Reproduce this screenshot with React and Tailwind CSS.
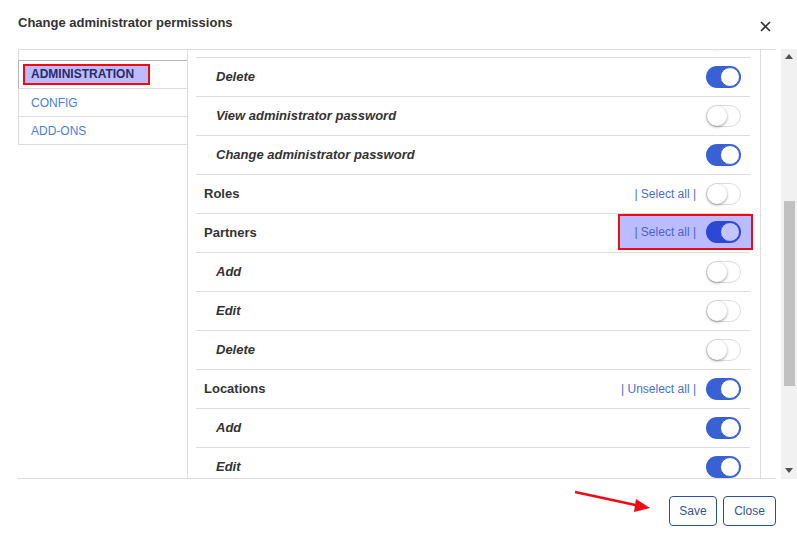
import { memo } from "react"

const rows = [
  { label: "", sub: true, on: false },
  { label: "Delete", sub: true, on: true },
  { label: "View administrator password", sub: true, on: false },
  { label: "Change administrator password", sub: true, on: true },
  { label: "Roles", link: "| Select all |", on: false },
  { label: "Partners", link: "| Select all |", on: true, marked: true },
  { label: "Add", sub: true, on: false },
  { label: "Edit", sub: true, on: false },
  { label: "Delete", sub: true, on: false },
  { label: "Locations", link: "| Unselect all |", on: true },
  { label: "Add", sub: true, on: true },
  { label: "Edit", sub: true, on: true },
]

// Switch: blue with knob on the right when on, white with shadowed knob when off
const Toggle = ({ on, marked }) => {
  if (on) {
    return (
      <div
        className={`flex h-[22px] w-[35px] items-center justify-end rounded-full p-[1px] ${
          marked ? "bg-[#2e48d6]" : "bg-[#3961d3]"
        }`}
      >
        <div
          className={`h-[20px] w-[20px] rounded-full border ${
            marked ? "border-[#2e48d6] bg-[#c4c4ff]" : "border-[#3961d3] bg-white"
          }`}
        />
      </div>
    )
  }
  return (
    <div className="flex h-[22px] w-[35px] items-center rounded-full border border-[#dedede] bg-white">
      <div className="h-[20px] w-[20px] rounded-full bg-white shadow-[0_1px_3px_rgba(0,0,0,0.4)]" />
    </div>
  )
}

const Row = ({ row }) => (
  <div className="flex h-[39px] w-[554px] shrink-0 items-center justify-between border-b border-[#dddddd] pr-[9px]">
    <span
      className={`text-[13px] font-bold text-[#333333] ${row.sub ? "pl-[20px] italic" : "pl-[8px]"}`}
    >
      {row.label}
    </span>
    {row.marked ? (
      <div className="-mr-[12px] -mt-[3px] flex h-[36px] items-center gap-[10px] border-2 border-[#f00a14] bg-[#bbbbff] pl-[14px] pr-[10px]">
        <span className="text-[12px] text-[#4a63d0]">{row.link}</span>
        <Toggle on={row.on} marked />
      </div>
    ) : (
      <div className="flex items-center gap-[10px]">
        {row.link && <span className="text-[12px] text-[#4a6fd0]">{row.link}</span>}
        <Toggle on={row.on} />
      </div>
    )}
  </div>
)

const App = memo(() => {
  return (
    <div
      className="relative flex h-[542px] w-[797px] flex-col overflow-hidden bg-white"
      style={{ fontFamily: '"Liberation Sans", Arial, sans-serif' }}
    >
      {/* header */}
      <div className="flex h-[49px] shrink-0 items-center justify-between pl-[18px] pr-[26px]">
        <h1 className="-mt-[3px] text-[13px] font-bold text-[#333333]">Change administrator permissions</h1>
        <svg width="11" height="11" viewBox="0 0 11 11" className="mt-[4px]">
          <path d="M1 1L10 10M10 1L1 10" stroke="#333" strokeWidth="1.6" />
        </svg>
      </div>

      {/* body */}
      <div className="flex h-[430px] shrink-0">
        <div className="ml-[18px] flex w-[758px] border-y border-[#dddddd]">
          {/* left nav */}
          <div className="w-[170px] shrink-0 border-r border-[#dddddd]">
            <div className="h-[10px] border-l border-[#dddddd]" />
            <div className="flex h-[28px] items-center border-l border-t border-[#b5b5b5] pl-[4px]">
              <span className="border-2 border-[#f00a14] bg-[#bbbbff] pl-[6px] pr-[14px] text-[12px] font-bold leading-[17px] text-[#2a2a66]">
                ADMINISTRATION
              </span>
            </div>
            <div className="flex h-[28px] items-center border-l border-t border-[#dddddd] pl-[12px] text-[12px] text-[#4a80d6]">
              CONFIG
            </div>
            <div className="flex h-[29px] items-center border-y border-l border-[#dddddd] pl-[12px] text-[12px] text-[#4a80d6]">
              ADD-ONS
            </div>
          </div>

          {/* permission list */}
          <div className="flex flex-1">
            <div className="ml-[8px] w-[560px] overflow-hidden">
              <div className="-mt-[31px] flex flex-col">
                {rows.map((row, i) => (
                  <Row key={i} row={row} />
                ))}
              </div>
            </div>
            <div className="ml-[4px] w-[16px] border-l border-[#dddddd]" />
          </div>
        </div>

        {/* scrollbar */}
        <div className="ml-[5px] flex w-[16px] flex-col items-center bg-[#f1f1f1] pt-[5px]">
          <svg width="8" height="5" viewBox="0 0 8 5">
            <path d="M0 5L4 0L8 5Z" fill="#505050" />
          </svg>
          <div className="mt-[142px] h-[185px] w-[11px] bg-[#c1c1c1]" />
          <div className="flex-1" />
          <svg width="8" height="5" viewBox="0 0 8 5" className="mb-[6px]">
            <path d="M0 0L8 0L4 5Z" fill="#505050" />
          </svg>
        </div>
      </div>

      {/* footer */}
      <div className="flex flex-1 items-center justify-end gap-[6px] pr-[21px]">
        <button className="h-[30px] w-[48px] rounded-[4px] border border-[#2a4f9a] text-[12px] text-[#2f55a4]">
          Save
        </button>
        <button className="h-[30px] w-[53px] rounded-[4px] border border-[#2a4f9a] text-[12px] text-[#2f55a4]">
          Close
        </button>
      </div>

      {/* annotation arrow */}
      <svg className="pointer-events-none absolute left-0 top-0" width="797" height="542">
        <line x1="575" y1="492" x2="640" y2="506" stroke="#f00a14" strokeWidth="2.5" />
        <path d="M650 508L636 499L634 512Z" fill="#f00a14" />
      </svg>
    </div>
  )
})

App.displayName = "App"

export default App
